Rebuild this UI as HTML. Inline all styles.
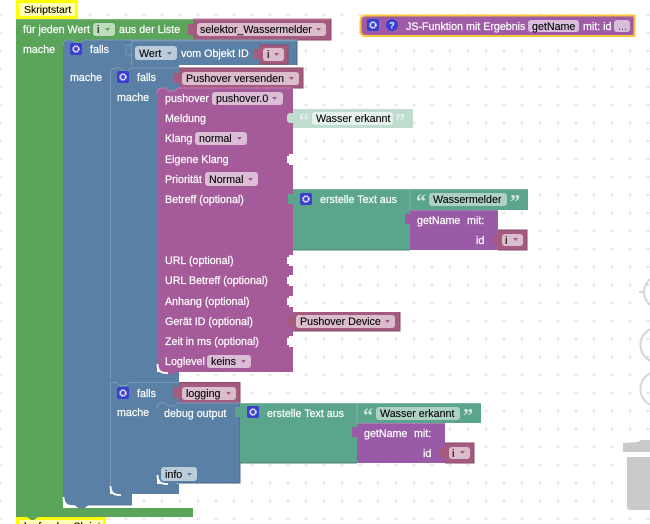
<!DOCTYPE html>
<html><head><meta charset="utf-8"><style>
html,body{margin:0;padding:0;background:#fff;width:650px;height:524px;overflow:hidden}
svg{display:block}
text{font-family:"Liberation Sans",Arial,sans-serif;font-size:10.7px}
.w{fill:#fff;stroke:#fff;stroke-width:.2px}.k{fill:#000;stroke:#000;stroke-width:.1px}
.q{font-family:"Liberation Serif",serif;font-size:20px;font-weight:bold}
</style></head><body>
<svg width="650" height="524" viewBox="0 0 650 524" xmlns="http://www.w3.org/2000/svg">
<defs>
<pattern id="p" x="0" y="13.500" width="18" height="18" patternUnits="userSpaceOnUse">
<path d="M-1.500 1.500h3M0 0v3M16.500 1.500h3M18 0v3" stroke="#dcdcdc" stroke-width="1"/>
</pattern>
<g id="gear"><rect x="-6" y="-6" width="12" height="12" rx="2" fill="#3a3fd0"/><circle r="2.800" fill="none" stroke="#fff" stroke-width="1.800" stroke-dasharray="1.600 .6"/></g>
</defs>
<rect width="650" height="524" fill="url(#p)"/>

<!-- workspace controls -->
<g fill="none" stroke="#d8d8d8" stroke-width="2.200">
<circle cx="660" cy="292" r="16"/><path d="M639 292h6"/>
<circle cx="658" cy="345" r="17.500"/><circle cx="658" cy="389" r="17.500"/></g>
<path d="M623 443l15-1 3-2h10v12h-28z" fill="#cacaca"/>
<path d="M627 457h26v53h-23a3 3 0 0 1-3-3z" fill="#cacaca"/>

<!-- Top comment -->
<path d="M30 0h5l-1 2h-3z" fill="#a55b80"/>
<rect x="16" y="0" width="62" height="19" fill="#ffff00"/>
<rect x="19" y="3" width="56" height="13" rx="2" fill="#ffffb8"/>
<text x="24" y="13" class="k" style="font-size:10.5px">Skriptstart</text>

<!-- Green loop -->
<path d="M16 19H193V40H63V508H193V517H16z" fill="#5ba55b"/>
<rect x="60" y="38" width="30" height="10" fill="#5ba55b"/>
<path d="M16 19.500H193" stroke="#7cb77c"/>
<text x="23" y="33" class="w">für jeden Wert</text>
<rect x="93" y="23" width="22" height="13" rx="3" fill="#bddcbd"/>
<text x="97" y="33" class="k">i</text><path d="M105 28h5l-2.500 3z" fill="#5ba55b"/>
<text x="119" y="33" class="w">aus der Liste</text>
<text x="23" y="53" class="w">mache</text>

<!-- selektor -->
<path d="M193 19H331V40H193V35h-5V24h5z" fill="#a55b80"/>
<path d="M193 19H331" stroke="#bf7c9c"/><path d="M331 19V40H193" fill="none" stroke="#8a4a69"/>
<rect x="197" y="23" width="129" height="13" rx="3" fill="#dbbdcc"/>
<text x="200" y="33" class="k">selektor_Wassermelder</text><path d="M316 28h5l-2.500 3z" fill="#a55b80"/>

<!-- Blue outer -->
<path d="M69 40h3l4 3h4l4-3H297V65H179V68H110V494H132V505.500H88l-4 3h-5l-4-3H72q-9 0-9-8V46q0-6 6-6z" fill="#5b80a5"/>
<rect x="107" y="65" width="28" height="10" fill="#5b80a5"/>
<path d="M63 46q0-6 6-6h3l4 3h4l4-3H297" fill="none" stroke="#7c99b7"/>
<path d="M297 40V65" stroke="#48668a"/>
<path d="M63.500 497q0 9 8.500 9h3" fill="none" stroke="#fff" stroke-width="1.800"/>
<use href="#gear" x="76" y="49"/>
<text x="90" y="53" class="w">falls</text>
<text x="70" y="81" class="w">mache</text>
<path d="M131.500 41H297M131.500 41V65" fill="none" stroke="#7c99b7"/>
<path d="M131 45h-5v10h5" fill="none" stroke="#7c99b7"/>
<rect x="135" y="46" width="42" height="14" rx="3" fill="#bdccdb"/>
<text x="139" y="57" class="k">Wert</text><path d="M167 52h5l-2.500 3z" fill="#5b80a5"/>
<text x="181" y="57" class="w">vom Objekt ID</text>
<path d="M259 45H288V64H259V59h-5V49h5z" fill="#a55b80"/>
<path d="M259 45H288V64H259" fill="none" stroke="#8a4a69"/>
<rect x="263" y="48" width="21" height="13" rx="3" fill="#dbbdcc"/>
<text x="267" y="58" class="k">i</text><path d="M274 53h5l-2.500 3z" fill="#a55b80"/>

<!-- Blue second (falls Pushover) -->
<path d="M116 68h3l4 3h4l4-3H179V88H157V372H179V382H110V74q0-6 6-6z" fill="#5b80a5"/>
<rect x="154" y="86" width="26" height="8" fill="#5b80a5"/>
<path d="M110.500 380V74q0-6 6-6h3l4 3h4l4-3H179" fill="none" stroke="#7c99b7"/>
<use href="#gear" x="123" y="77"/>
<text x="137" y="81" class="w">falls</text>
<text x="117" y="101" class="w">mache</text>
<path d="M179 68H303V88H179V83h-5V73h5z" fill="#a55b80"/>
<path d="M179 68H303V88H179" fill="none" stroke="#8a4a69"/>
<rect x="182" y="72" width="117" height="13" rx="3" fill="#dbbdcc"/>
<text x="186" y="82" class="k">Pushover versenden</text><path d="M289 77h5l-2.500 3z" fill="#a55b80"/>

<!-- Pushover block -->
<path d="M162 88h3l4 3h5l4-3H293V372H176l-4 2.500h-4l-4-2.500H166q-9 0-9-8V93q0-5 5-5z" fill="#a55b99"/>
<path d="M157 93q0-5 5-5h3l4 3h5l4-3H293" fill="none" stroke="#bd7cb3"/>
<path d="M157.500 364q0 9 8.500 9h2" fill="none" stroke="#fff" stroke-width="1.800"/>
<text x="165" y="102" class="w">pushover</text>
<rect x="212" y="92" width="71" height="13" rx="3" fill="#dbbdd6"/>
<text x="216" y="102" class="k">pushover.0</text><path d="M272 97h5l-2.500 3z" fill="#a55b99"/>
<text x="165" y="122" class="w">Meldung</text>
<text x="165" y="142" class="w">Klang</text>
<rect x="195" y="132" width="52" height="13" rx="3" fill="#dbbdd6"/>
<text x="199" y="142" class="k">normal</text><path d="M237 137h5l-2.500 3z" fill="#a55b99"/>
<text x="165" y="163" class="w">Eigene Klang</text>
<text x="165" y="183" class="w">Priorität</text>
<rect x="205" y="172" width="53" height="14" rx="3" fill="#dbbdd6"/>
<text x="209" y="183" class="k">Normal</text><path d="M248 178h5l-2.500 3z" fill="#a55b99"/>
<text x="165" y="203" class="w">Betreff (optional)</text>
<text x="165" y="264" class="w">URL (optional)</text>
<text x="165" y="284" class="w">URL Betreff (optional)</text>
<text x="165" y="305" class="w">Anhang (optional)</text>
<text x="165" y="325" class="w">Gerät ID (optional)</text>
<text x="165" y="345" class="w">Zeit in ms (optional)</text>
<text x="165" y="365" class="w">Loglevel</text>
<rect x="207" y="355" width="44" height="13" rx="3" fill="#dbbdd6"/>
<text x="211" y="365" class="k">keins</text><path d="M241 360h5l-2.500 3z" fill="#a55b99"/>
<!-- white notches -->
<g fill="#fff">
<path d="M293 154v11h-4v-2h-2v-7h2v-2z"/>
<path d="M293 255v11h-4v-2h-2v-7h2v-2z"/>
<path d="M293 275v11h-4v-2h-2v-7h2v-2z"/>
<path d="M293 296v11h-4v-2h-2v-7h2v-2z"/>
<path d="M293 336v11h-4v-2h-2v-7h2v-2z"/>
</g>

<!-- Meldung string -->
<path d="M293 109H413V128H293V123h-4l-2-2v-6l2-2h4z" fill="#bfdccf"/>
<rect x="312" y="112" width="81" height="13" rx="3" fill="#e6f2ed"/>
<text x="299" y="127" class="q" fill="#e3f0ea">“</text>
<text x="395" y="127" class="q" fill="#e3f0ea">”</text>
<text x="316" y="122" class="k">Wasser erkannt</text>

<!-- erstelle Text 1 -->
<path d="M293 189H410V250H293V204h-5v-10h5z" fill="#5ba58c"/>
<path d="M293 189.500H410" stroke="#7cb7a3"/><path d="M293 250H410" stroke="#488471"/>
<use href="#gear" x="306" y="199"/>
<text x="320" y="203" class="w">erstelle Text aus</text>
<path d="M410 189H528V210H410V203h-5v-8h5z" fill="#5ba58c"/>
<path d="M410 189V210M410 189.500H528" fill="none" stroke="#7cb7a3"/>
<rect x="429" y="193" width="78" height="13" rx="3" fill="#add2c5"/>
<text x="416" y="208" class="q" fill="#d4e8e0">“</text>
<text x="510" y="208" class="q" fill="#d4e8e0">”</text>
<text x="433" y="203" class="k">Wassermelder</text>
<path d="M410 210H498V250H410V224h-5v-10h5z" fill="#995ba5"/>
<path d="M410 210.500H498" stroke="#ad7cb7"/>
<text x="417" y="224" class="w">getName</text>
<text x="467" y="224" class="w">mit:</text>
<text x="476" y="244" class="w">id</text>
<path d="M498 230H527V250H498V245h-5V235h5z" fill="#a55b80"/>
<path d="M498 230H527V250H498" fill="none" stroke="#8a4a69"/>
<rect x="502" y="234" width="21" height="12" rx="3" fill="#dbbdcc"/>
<text x="505" y="244" class="k">i</text><path d="M513 238h5l-2.500 3z" fill="#a55b80"/>

<!-- Pushover Device -->
<path d="M293 312H400V331H293V326h-5V316h5z" fill="#a55b80"/>
<path d="M293 331H400V312" fill="none" stroke="#8a4a69"/>
<rect x="296" y="315" width="99" height="13" rx="3" fill="#dbbdcc"/>
<text x="300" y="325" class="k">Pushover Device</text><path d="M385 320h5l-2.500 3z" fill="#a55b80"/>

<!-- Blue third (falls logging) -->
<rect x="110" y="380" width="69" height="8" fill="#5b80a5"/>
<path d="M110 382H179V403H157V484H179V494H131l-4 2.500h-6l-4-2.500H119q-9 0-9-8z" fill="#5b80a5"/>
<rect x="154" y="401" width="26" height="8" fill="#5b80a5"/>
<path d="M110 382.500H116l4 3h6l4-3H179" fill="none" stroke="#7c99b7"/>
<path d="M110.500 486q0 9 8.500 9h2" fill="none" stroke="#fff" stroke-width="1.800"/>
<path d="M110.500 382V486" stroke="#7c99b7"/>
<use href="#gear" x="123" y="393"/>
<text x="137" y="397" class="w">falls</text>
<text x="117" y="416" class="w">mache</text>
<path d="M179 382H240V403H179V398h-6V387h6z" fill="#a55b80"/>
<path d="M179 382.500H240V403H179" fill="none" stroke="#8a4a69"/>
<rect x="182" y="387" width="54" height="13" rx="3" fill="#dbbdcc"/>
<text x="186" y="397" class="k">logging</text><path d="M226 392h5l-2.500 3z" fill="#a55b80"/>

<!-- debug output -->
<path d="M162 403h3l4 3h5l4-3H240V483H178l-4 3h-4l-4-3H166q-9 0-9-8V408q0-5 5-5z" fill="#5b80a5"/>
<path d="M157 408q0-5 5-5h3l4 3h5l4-3H240" fill="none" stroke="#7c99b7"/>
<path d="M240 403V483H178" fill="none" stroke="#48668a"/>
<path d="M157.500 475q0 9 8.500 9h2" fill="none" stroke="#fff" stroke-width="1.800"/>
<text x="164" y="417" class="w">debug output</text>
<rect x="161" y="467" width="36" height="14" rx="3" fill="#bdccdb"/>
<text x="165" y="478" class="k">info</text><path d="M187 473h5l-2.500 3z" fill="#5b80a5"/>

<!-- erstelle Text 2 -->
<path d="M240 403H357V463H240V417h-5v-10h5z" fill="#5ba58c"/>
<path d="M240 403.500H357" stroke="#7cb7a3"/><path d="M240 463H357" stroke="#488471"/>
<use href="#gear" x="253" y="412"/>
<text x="267" y="417" class="w">erstelle Text aus</text>
<path d="M357 403H481V423H357V417h-5v-9h5z" fill="#5ba58c"/>
<path d="M357 403V423M357 403.500H481" fill="none" stroke="#7cb7a3"/>
<rect x="376" y="407" width="84" height="13" rx="3" fill="#add2c5"/>
<text x="363" y="422" class="q" fill="#d4e8e0">“</text>
<text x="463" y="422" class="q" fill="#d4e8e0">”</text>
<text x="380" y="417" class="k">Wasser erkannt</text>
<path d="M357 423H445V463H357V437h-5v-10h5z" fill="#995ba5"/>
<path d="M357 423.500H445" stroke="#ad7cb7"/>
<text x="364" y="437" class="w">getName</text>
<text x="414" y="437" class="w">mit:</text>
<text x="423" y="457" class="w">id</text>
<path d="M445 443H474V463H445V458h-5V448h5z" fill="#a55b80"/>
<path d="M445 443H474V463H445" fill="none" stroke="#8a4a69"/>
<rect x="449" y="447" width="21" height="12" rx="3" fill="#dbbdcc"/>
<text x="452" y="457" class="k">i</text><path d="M460 451h5l-2.500 3z" fill="#a55b80"/>

<!-- JS function -->
<path d="M366 15.500H634.500V36H366q-5.500 0-5.500-5.500v-9.500q0-5.500 5.500-5.500z" fill="#9f5ca6" stroke="#f9c53c" stroke-width="2"/>
<use href="#gear" x="373" y="25"/>
<circle cx="392" cy="25" r="6" fill="#3a3fd0"/>
<text x="392" y="28.500" text-anchor="middle" fill="#fff" style="font-size:9px;font-weight:bold">?</text>
<text x="406" y="30" class="w">JS-Funktion mit Ergebnis</text>
<rect x="528" y="20" width="51" height="12" rx="3" fill="#d8bddc"/>
<text x="532" y="30" class="k">getName</text>
<text x="583" y="30" class="w">mit: id</text>
<rect x="614" y="20" width="16" height="12" rx="3" fill="#d8bddc"/>
<text x="618" y="30" fill="#444">...</text>

<!-- Bottom comment -->
<rect x="16" y="517" width="90" height="7" fill="#ffff00"/>
<rect x="19" y="520" width="84" height="4" fill="#ffffb8"/>
<path d="M27 517h11l-4 3h-3z" fill="#5ba55b"/>
<text x="24" y="530" class="k">laufendes Skript</text>
</svg>
</body></html>
